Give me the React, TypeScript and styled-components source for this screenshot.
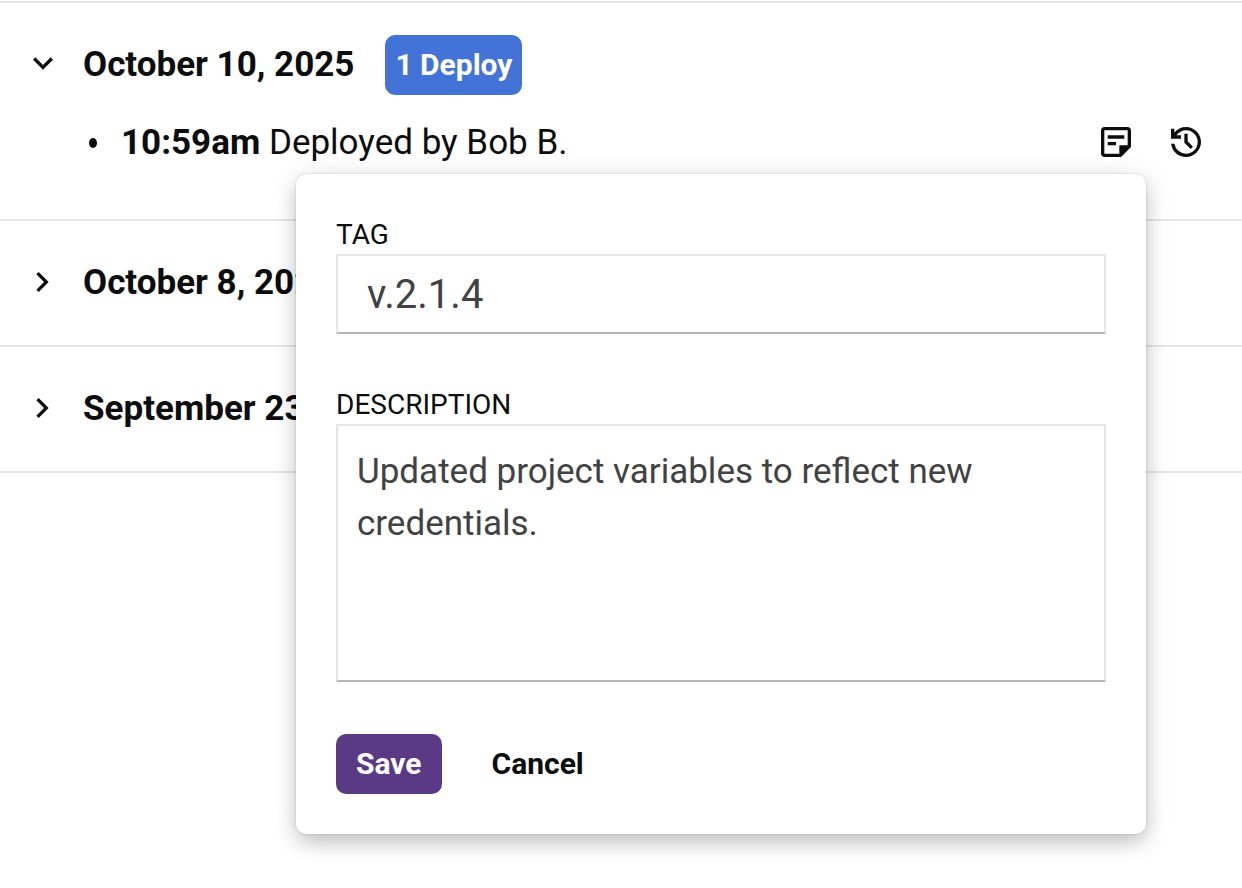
import React, { useState } from "react";
import styled, { createGlobalStyle } from "styled-components";

const GlobalStyle = createGlobalStyle`
  * { box-sizing: border-box; }
  body {
    margin: 0;
    background: #fff;
    color: #0d0d0d;
    font-family: Roboto, "Liberation Sans", sans-serif;
    font-size: 35px;
  }
  button, input, textarea { font: inherit; color: inherit; }
`;

const Page = styled.main`
  padding-top: 1px;
  min-height: 100vh;
`;

const Group = styled.section<{ $open?: boolean }>`
  padding: 32px 36px 32px 23px;
  padding-bottom: ${(p) => (p.$open ? 48 : 32)}px;
  border-top: 2px solid #e6e6e6;

  &:last-child { border-bottom: 2px solid #e6e6e6; }
`;

const GroupHeader = styled.header`
  display: flex;
  align-items: center;
  gap: 31px;
  height: 60px;
`;

const GroupTitle = styled.h2`
  margin: 0;
  font-size: 35px;
  font-weight: 700;
`;

const Toggle = styled.button`
  display: flex;
  align-items: center;
  gap: 20px;
  height: 60px;
  padding: 0 0 2px;
  border: 0;
  background: none;
  cursor: pointer;
`;

const DateText = styled.span`
  padding-top: 2px;
  line-height: 56px;
`;

const Badge = styled.span`
  padding: 0 10px;
  border-radius: 10px;
  background: #4373d6;
  color: #fff;
  font-size: 30px;
  font-weight: 700;
  line-height: 60px;
`;

const DeployList = styled.ul`
  margin: 20px 0 0;
  padding: 0 0 0 66px;
  list-style: none;
`;

const DeployItem = styled.li`
  position: relative;
  display: flex;
  align-items: center;
  height: 56px;
`;

const Bullet = styled.span`
  width: 8px;
  height: 10px;
  margin-right: 24px;
  border-radius: 50%;
  background: #0d0d0d;
`;

const DeployText = styled.p`
  margin: 0;
  flex: 1;
  line-height: 56px;
`;

const Actions = styled.div`
  display: flex;
  gap: 30px;
  padding-bottom: 2px;
`;

const IconButton = styled.button`
  display: flex;
  padding: 0;
  border: 0;
  background: none;
  cursor: pointer;
`;

const Icon = styled.svg`
  width: 40px;
  height: 40px;
  fill: currentColor;
`;

const Popover = styled.form`
  position: absolute;
  z-index: 1;
  top: calc(100% + 3px);
  right: 60px;
  width: 850px;
  max-width: calc(100vw - 120px);
  padding: 40px;
  border-radius: 10px;
  background: #fff;
  box-shadow:
    0 0 2px rgba(0, 0, 0, 0.2),
    0 10px 20px -2px rgba(0, 0, 0, 0.18),
    0 4px 28px rgba(0, 0, 0, 0.12);
`;

const Field = styled.div<{ $gap: number }>`
  display: flex;
  flex-direction: column;
  margin-bottom: ${(p) => p.$gap}px;
`;

const Label = styled.label`
  padding-top: 2px;
  font-size: 28px;
  line-height: 38px;
  text-transform: uppercase;
`;

const TextInput = styled.input`
  width: 100%;
  height: 80px;
  padding: 0 29px;
  border: 2px solid #e6e6e6;
  border-bottom-color: #b5b5b5;
  border-radius: 0;
  outline: none;
  background: transparent;
  color: #424242;
  font-size: 40px;
`;

const TextArea = styled.textarea`
  width: 100%;
  height: 258px;
  padding: 20px 19px;
  border: 2px solid #e6e6e6;
  border-bottom-color: #b5b5b5;
  border-radius: 0;
  outline: none;
  resize: none;
  background: transparent;
  color: #424242;
  font-size: 35px;
  line-height: 52px;
`;

const ButtonRow = styled.div`
  display: flex;
  gap: 30px;
`;

const Button = styled.button<{ $primary?: boolean }>`
  height: 60px;
  padding: 0 20px 2px;
  border: 0;
  border-radius: 10px;
  background: ${(p) => (p.$primary ? "#5a3a85" : "transparent")};
  color: ${(p) => (p.$primary ? "#fff" : "#0d0d0d")};
  font-size: 30px;
  font-weight: 700;
  cursor: pointer;
`;

function Chevron({ open }: { open?: boolean }) {
  return (
    <Icon viewBox="0 0 24 24" aria-hidden="true">
      {open ? (
        <path d="M12 15.375l-6-6 1.4-1.4 4.6 4.6 4.6-4.6 1.4 1.4z" />
      ) : (
        <path d="M12.6 12 8 7.4 9.4 6l6 6-6 6L8 16.6z" />
      )}
    </Icon>
  );
}

function NoteIcon() {
  return (
    <Icon viewBox="0 0 24 24" aria-hidden="true">
      <path
        fillRule="evenodd"
        d="M5 3h14q.825 0 1.413.588T21 5v10l-6 6H5q-.825 0-1.412-.587T3 19V5q0-.825.588-1.412T5 3zM5 5v14h9v-5h5V5zM7 8h10v2H7zM7 12h5v2H7z"
      />
    </Icon>
  );
}

function HistoryIcon() {
  return (
    <Icon viewBox="0 0 24 24" aria-hidden="true">
      <path d="M12 21q-3.45 0-6.012-2.287T3.05 13H5.1q.35 2.6 2.313 4.3T12 19q2.925 0 4.963-2.037T19 12t-2.037-4.962T12 5q-1.725 0-3.225.8T6.25 8H9v2H3V4h2v2.35q1.275-1.6 3.113-2.475T12 3q1.875 0 3.513.713t2.85 1.924t1.925 2.85T21 12t-.712 3.513t-1.925 2.85t-2.85 1.925T12 21m2.8-4.8L11 12.4V7h2v4.6l3.2 3.2z" />
    </Icon>
  );
}

function GroupHeading({ date, open, count }: { date: string; open?: boolean; count?: string }) {
  return (
    <GroupHeader>
      <GroupTitle>
        <Toggle type="button" aria-expanded={!!open}>
          <Chevron open={open} />
          <DateText>{date}</DateText>
        </Toggle>
      </GroupTitle>
      {count && <Badge>{count}</Badge>}
    </GroupHeader>
  );
}

export default function App() {
  const [tag, setTag] = useState("v.2.1.4");
  const [description, setDescription] = useState(
    "Updated project variables to reflect new credentials."
  );

  return (
    <>
      <GlobalStyle />
      <Page>
        <Group $open>
          <GroupHeading date="October 10, 2025" open count="1 Deploy" />
          <DeployList>
            <DeployItem>
              <Bullet />
              <DeployText>
                <b>10:59am</b> Deployed by Bob B.
              </DeployText>
              <Actions>
                <IconButton type="button" aria-label="Edit note">
                  <NoteIcon />
                </IconButton>
                <IconButton type="button" aria-label="View history">
                  <HistoryIcon />
                </IconButton>
              </Actions>
              <Popover onSubmit={(e) => e.preventDefault()}>
                <Field $gap={50}>
                  <Label htmlFor="tag">Tag</Label>
                  <TextInput id="tag" value={tag} onChange={(e) => setTag(e.target.value)} />
                </Field>
                <Field $gap={52}>
                  <Label htmlFor="description">Description</Label>
                  <TextArea
                    id="description"
                    spellCheck={false}
                    value={description}
                    onChange={(e) => setDescription(e.target.value)}
                  />
                </Field>
                <ButtonRow>
                  <Button type="submit" $primary>Save</Button>
                  <Button type="button">Cancel</Button>
                </ButtonRow>
              </Popover>
            </DeployItem>
          </DeployList>
        </Group>
        <Group>
          <GroupHeading date="October 8, 2025" />
        </Group>
        <Group>
          <GroupHeading date="September 23, 2025" />
        </Group>
      </Page>
    </>
  );
}
